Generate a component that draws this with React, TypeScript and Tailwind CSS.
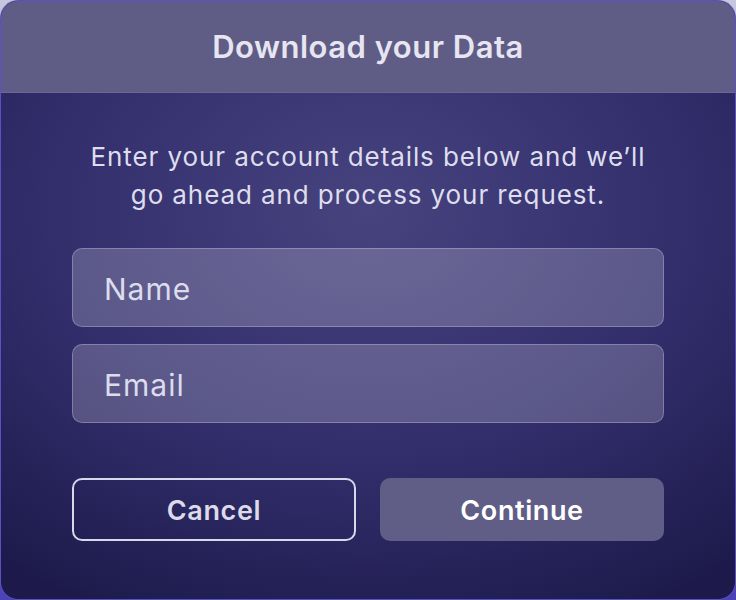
import React from "react";

export default function App() {
  return (
    <div className="w-[736px] h-[600px] bg-[linear-gradient(180deg,#c9c8de_0%,#6a64c4_30%,#4c43b8_100%)]" style={{ fontFamily: "Inter, 'Noto Sans', sans-serif" }}>
      <div className="w-[736px] h-[600px] rounded-[18px] overflow-hidden border border-[#5a52c4] flex flex-col bg-[radial-gradient(ellipse_80%_75%_at_50%_35%,#47437f_0%,#322e6c_55%,#1d1a4b_100%)]">
        <div className="h-[92px] shrink-0 bg-[#5f5d85] flex items-center justify-center border-b border-[#6a6890] pt-[2px]">
          <h1 className="text-[31px] font-semibold text-[#e6e5f1] tracking-[0.5px]">Download your Data</h1>
        </div>
        <div className="flex flex-col px-[71px] pt-[45px]">
          <p className="text-center text-[26px] leading-[38px] text-[#dedded] tracking-[0.9px]">
            Enter your account details below and we’ll
            <br />
            go ahead and process your request.
          </p>
          <div className="mt-[34px] flex flex-col gap-[17px]">
            <div className="h-[79px] rounded-[10px] bg-white/20 border border-white/25 flex items-center px-[31px] pt-[3px]">
              <span className="text-[30px] text-[#dddcec] tracking-[1px]">Name</span>
            </div>
            <div className="h-[79px] rounded-[10px] bg-white/20 border border-white/25 flex items-center px-[31px] pt-[3px]">
              <span className="text-[30px] text-[#dddcec] tracking-[1px]">Email</span>
            </div>
          </div>
          <div className="mt-[55px] flex justify-between">
            <button className="w-[284px] h-[63px] rounded-[10px] border-2 border-[#d9d7ea] text-[27px] font-semibold text-[#dcdbea] tracking-[0.6px] flex items-center justify-center pt-[3px]">
              Cancel
            </button>
            <button className="w-[284px] h-[63px] rounded-[10px] bg-[#605d87] text-[27px] font-semibold text-white tracking-[0.6px] flex items-center justify-center pt-[3px]">
              Continue
            </button>
          </div>
        </div>
      </div>
    </div>
  );
}
